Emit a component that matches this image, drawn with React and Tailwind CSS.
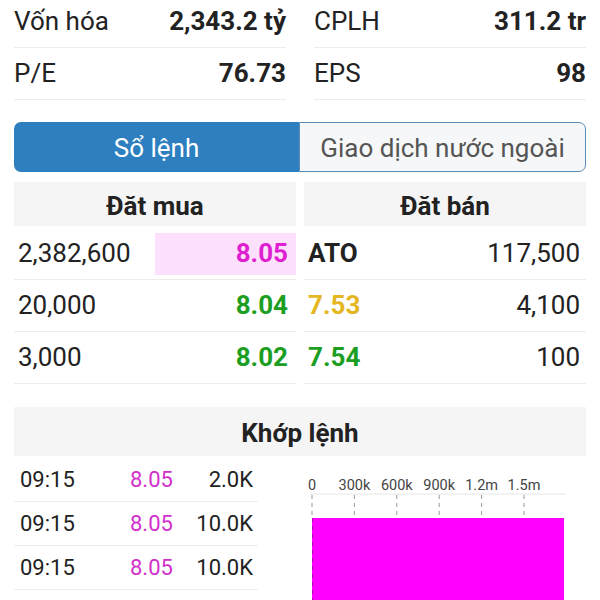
const stats = [
  [
    ["Vốn hóa", "2,343.2 tỷ"],
    ["P/E", "76.73"],
  ],
  [
    ["CPLH", "311.2 tr"],
    ["EPS", "98"],
  ],
];

const bids = [
  { qty: "2,382,600", price: "8.05", color: "text-[#e01fd2]", hl: true },
  { qty: "20,000", price: "8.04", color: "text-[#1c9e22]" },
  { qty: "3,000", price: "8.02", color: "text-[#1c9e22]" },
];

const asks = [
  { price: "ATO", qty: "117,500", color: "text-[#222]" },
  { price: "7.53", qty: "4,100", color: "text-[#e3b622]" },
  { price: "7.54", qty: "100", color: "text-[#1c9e22]" },
];

const matches = [
  ["09:15", "8.05", "2.0K"],
  ["09:15", "8.05", "10.0K"],
  ["09:15", "8.05", "10.0K"],
];

function VolumeChart() {
  const ticks = ["0", "300k", "600k", "900k", "1.2m", "1.5m"];
  return (
    <svg width="272" height="146" viewBox="0 0 272 146" className="block shrink-0">
      {ticks.map((t, i) => (
        <text
          key={t}
          x={10 + i * 42.4}
          y="32"
          textAnchor="middle"
          fontSize="14.5"
          fill="#444"
          fontFamily="Roboto, sans-serif"
        >
          {t}
        </text>
      ))}
      <line x1="8" y1="36" x2="264" y2="36" stroke="#e6e6e6" strokeWidth="1" />
      {ticks.map((t, i) => (
        <line
          key={"l" + t}
          x1={10 + i * 42.4}
          y1="37"
          x2={10 + i * 42.4}
          y2="60"
          stroke="#999"
          strokeWidth="1"
          strokeDasharray="4 4"
        />
      ))}
      <rect x="10" y="60" width="252" height="90" fill="#ff00ff" />
      <line x1="10.5" y1="60" x2="10.5" y2="146" stroke="#b000b0" strokeWidth="1" strokeDasharray="4 4" />
    </svg>
  );
}

export default function App() {
  return (
    <div className="w-[600px] h-[600px] overflow-hidden bg-white px-[14px] text-[#222]" style={{ fontFamily: "Roboto, 'Liberation Sans', sans-serif" }}>
      {/* stats */}
      <div className="-mt-[4px] grid grid-cols-2 gap-x-[28px]">
        {stats.map((col, ci) => (
          <div key={ci}>
            {col.map(([label, value]) => (
              <div key={label} className="flex h-[52px] items-center justify-between border-b border-[#ececec]">
                <span className="text-[26px]">{label}</span>
                <span className="text-[26px] font-bold">{value}</span>
              </div>
            ))}
          </div>
        ))}
      </div>

      {/* tabs */}
      <div className="mt-[22px] flex h-[50px] rounded-[7px]">
        <div className="flex w-[285px] items-center justify-center rounded-l-[7px] bg-[#2d7fbf] pt-[2px] text-[26px] text-white">
          Sổ lệnh
        </div>
        <div className="flex flex-1 items-center justify-center rounded-r-[7px] border border-[#5a8cb6] bg-[#f6f7f8] pt-[2px] text-[26px] text-[#555]">
          Giao dịch nước ngoài
        </div>
      </div>

      {/* order book */}
      <div className="mt-[10px] grid grid-cols-2 gap-x-[8px]">
        <div>
          <div className="mb-[2px] flex h-[44px] items-center justify-center bg-[#f5f5f5] pt-[5px] text-[26px] font-bold">Đăt mua</div>
          {bids.map((b) => (
            <div key={b.qty} className="flex h-[52px] items-center justify-between border-b border-[#ececec] pl-[4px]">
              <span className="text-[26px]">{b.qty}</span>
              <span
                className={`flex h-[42px] items-center justify-end pr-[8px] text-[26px] font-bold ${b.color} ${
                  b.hl ? "w-[141px] bg-[#fde0fb]" : ""
                }`}
              >
                {b.price}
              </span>
            </div>
          ))}
        </div>
        <div>
          <div className="mb-[2px] flex h-[44px] items-center justify-center bg-[#f5f5f5] pt-[5px] text-[26px] font-bold">Đăt bán</div>
          {asks.map((a) => (
            <div key={a.qty} className="flex h-[52px] items-center justify-between border-b border-[#ececec] pl-[4px] pr-[6px]">
              <span className={`text-[26px] font-bold ${a.color}`}>{a.price}</span>
              <span className="text-[26px]">{a.qty}</span>
            </div>
          ))}
        </div>
      </div>

      {/* matched orders */}
      <div className="mt-[23px] flex h-[49px] items-center justify-center bg-[#f5f5f5] pt-[3px] text-[26px] font-bold">
        Khớp lệnh
      </div>
      <div className="mt-[2px] flex">
        <div className="w-[244px] shrink-0">
          {matches.map(([t, p, v], i) => (
            <div key={i} className="flex h-[44px] items-center border-b border-[#ececec] pl-[6px] pr-[5px] text-[22px]">
              <span className="w-[110px]">{t}</span>
              <span className="w-[62px] text-[#d12fcc]">{p}</span>
              <span className="flex-1 text-right">{v}</span>
            </div>
          ))}
        </div>
        <div className="ml-[44px]">
          <VolumeChart />
        </div>
      </div>
    </div>
  );
}
